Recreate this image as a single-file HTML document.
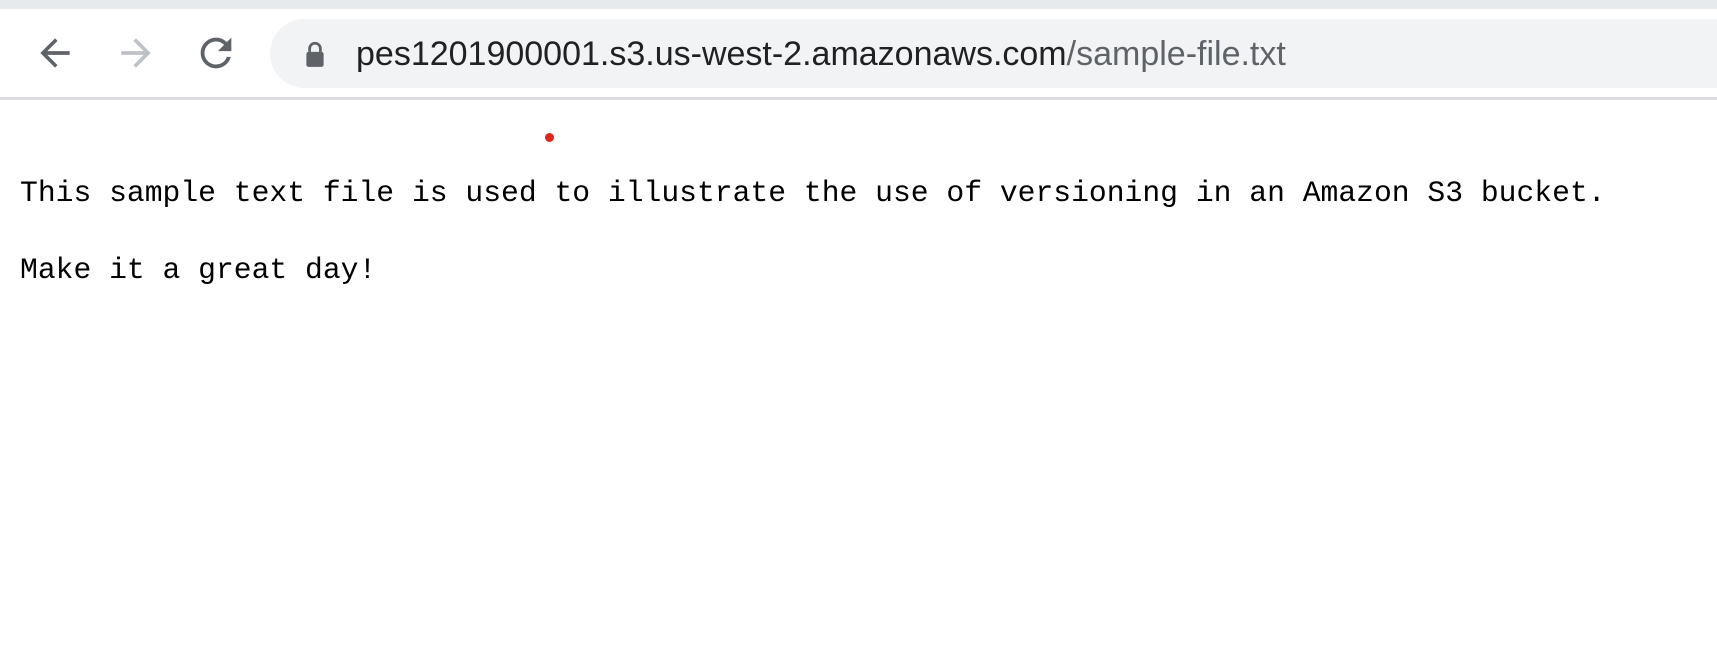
<!DOCTYPE html>
<html><head><style>
html,body{margin:0;padding:0;width:1717px;height:652px;overflow:hidden;background:#fff;}
.top{position:absolute;left:0;top:0;width:1717px;height:9px;background:#e7eaed;}
.bar{position:absolute;left:0;top:9px;width:1717px;height:89px;background:#fff;}
.sep{position:absolute;left:0;top:97px;width:1717px;height:3px;background:#dadce0;}
.omni{position:absolute;left:270px;top:19px;width:1480px;height:69px;background:#f1f3f4;border-radius:35px;}
.url{position:absolute;left:356px;top:35px;font:34px "Liberation Sans",sans-serif;color:#202124;white-space:nowrap;}
.url span{color:#5f6368;}
svg{position:absolute;}
.txt{position:absolute;left:20px;top:174px;font:29.7px/38.5px "Liberation Mono",monospace;color:#000;white-space:pre;margin:0;}
.dot{position:absolute;left:545px;top:133px;width:9px;height:9px;border-radius:50%;background:#e2231a;}
</style></head><body>
<div class="top"></div><div class="bar"></div><div class="sep"></div>
<div class="omni"></div>
<svg style="left:33px;top:31px" width="44" height="44" viewBox="0 0 24 24"><path d="M20 11H7.8l5.6-5.6L12 4l-8 8 8 8 1.4-1.4L7.8 13H20z" fill="#5f6368"/></svg>
<svg style="left:114px;top:31px" width="44" height="44" viewBox="0 0 24 24"><path d="M4 11h12.2l-5.6-5.6L12 4l8 8-8 8-1.4-1.4 5.6-5.6H4z" fill="#bdc1c6"/></svg>
<svg style="left:193px;top:30px" width="46" height="46" viewBox="0 0 24 24"><path d="M17.65 6.35A7.96 7.96 0 0 0 12 4a8 8 0 1 0 7.730 10h-2.08A6 6 0 1 1 12 6c1.66 0 3.14.69 4.22 1.78L13 11h7V4z" fill="#5f6368"/></svg>
<svg style="left:302px;top:40px" width="26" height="28" viewBox="0 0 24 26"><path d="M7 11V8a5 5 0 0 1 10 0v3" stroke="#5f6368" stroke-width="2.6" fill="none"/><rect x="4" y="11" width="16" height="14" rx="2" fill="#5f6368"/></svg>
<div class="url">pes1201900001.s3.us-west-2.amazonaws.com<span>/sample-file.txt</span></div>
<div class="dot"></div>
<pre class="txt">This sample text file is used to illustrate the use of versioning in an Amazon S3 bucket.

Make it a great day!</pre>
</body></html>
